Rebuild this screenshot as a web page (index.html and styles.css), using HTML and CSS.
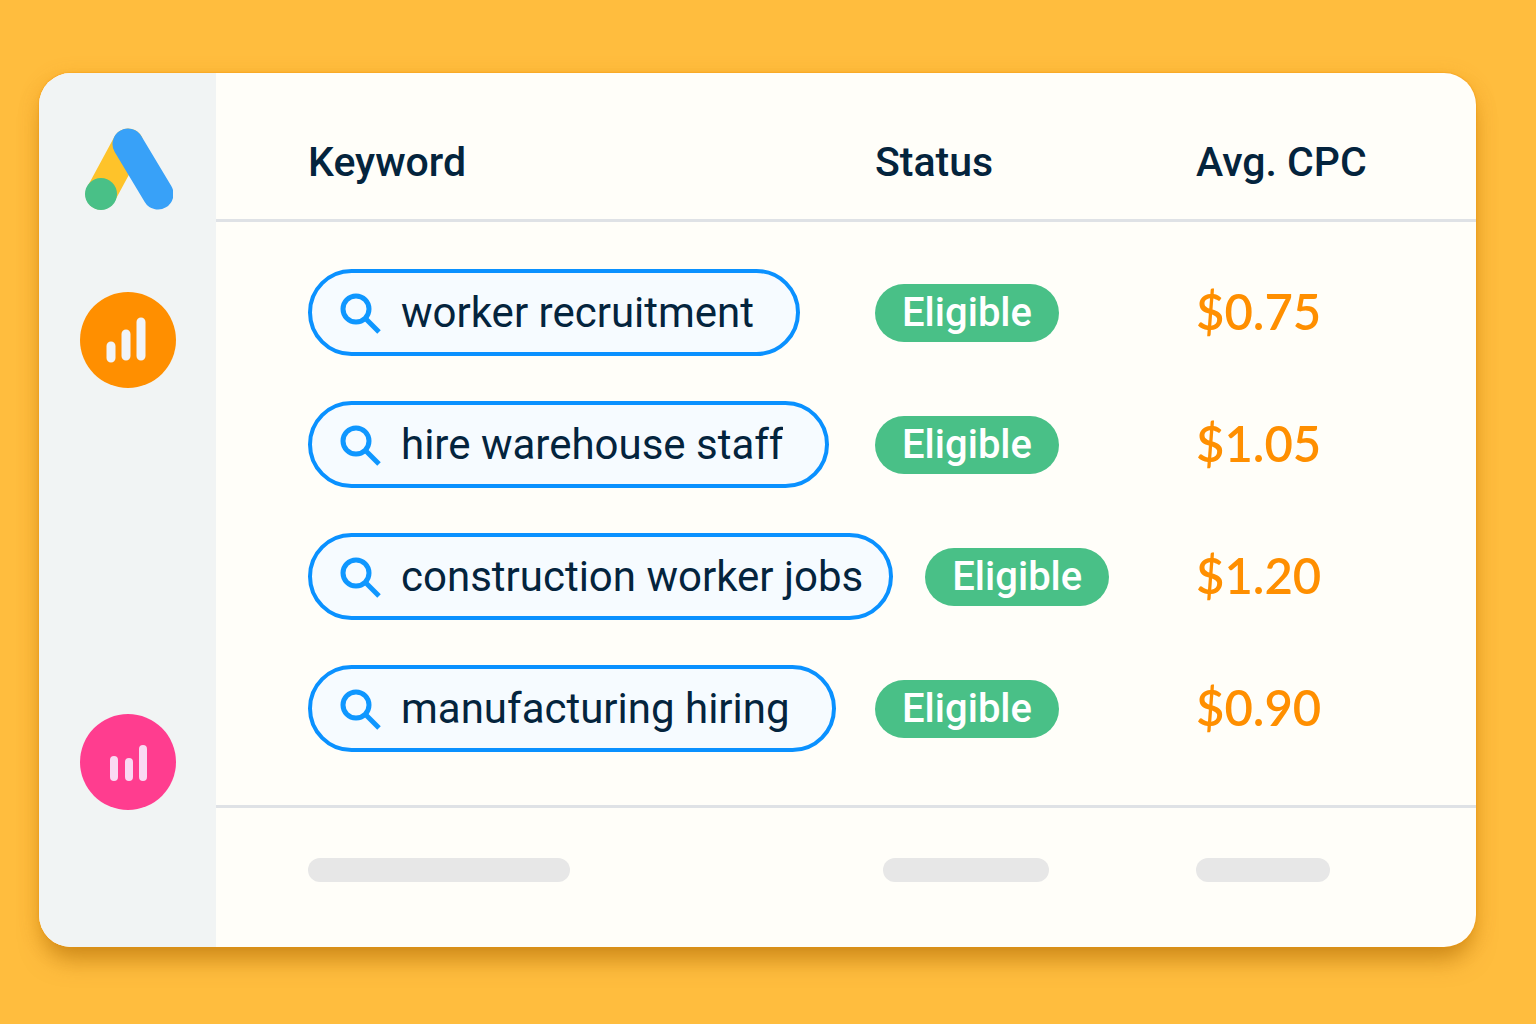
FILE: index.html
```
<!DOCTYPE html>
<html lang="en">
<head>
    <meta charset="UTF-8">
    <meta name="viewport" content="width=device-width, initial-scale=1.0">
    <title>Keywords</title>
    <link rel="stylesheet" href="styles.css">
</head>
<body>
    <div class="card">
        <nav class="sidebar">
            <a href="#" class="logo" aria-label="Home">
                <svg width="90" height="84" viewBox="0 0 90 84">
                    <path d="M45 17 L18 67" stroke="#fec32a" stroke-width="31" stroke-linecap="round"/>
                    <path d="M45 17 L75 67" stroke="#38a1f8" stroke-width="31" stroke-linecap="round"/>
                    <circle cx="18" cy="67" r="16" fill="#49c087"/>
                </svg>
            </a>
            <button class="round orange" aria-label="Campaigns">
                <svg width="96" height="96" viewBox="0 0 96 96">
                    <path d="M31 54V66M46 42V64M61 30V64" stroke="#f1f4f8" stroke-width="9" stroke-linecap="round"/>
                </svg>
            </button>
            <button class="round pink" aria-label="Reports">
                <svg width="96" height="96" viewBox="0 0 96 96">
                    <path d="M34 46V63M49 48V63M63 35V63" stroke="#fad9f3" stroke-width="8" stroke-linecap="round"/>
                </svg>
            </button>
        </nav>
        <table class="keywords">
            <thead>
                <tr>
                    <th>Keyword</th>
                    <th>Status</th>
                    <th>Avg. CPC</th>
                </tr>
            </thead>
            <tbody>
                <tr>
                    <td>
                        <label class="pill">
                            <svg width="42" height="42" viewBox="0 0 42 42"><circle cx="16" cy="17" r="13"/><path d="M25 26L39 40"/></svg>
                            <input type="text" value="worker recruitment" aria-label="Keyword 1">
                        </label>
                    </td>
                    <td><span class="badge">Eligible</span></td>
                    <td class="price">$0.75</td>
                </tr>
                <tr>
                    <td>
                        <label class="pill">
                            <svg width="42" height="42" viewBox="0 0 42 42"><circle cx="16" cy="17" r="13"/><path d="M25 26L39 40"/></svg>
                            <input type="text" value="hire warehouse staff" aria-label="Keyword 2">
                        </label>
                    </td>
                    <td><span class="badge">Eligible</span></td>
                    <td class="price">$1.05</td>
                </tr>
                <tr>
                    <td>
                        <label class="pill long">
                            <svg width="42" height="42" viewBox="0 0 42 42"><circle cx="16" cy="17" r="13"/><path d="M25 26L39 40"/></svg>
                            <input type="text" value="construction worker jobs" aria-label="Keyword 3">
                        </label>
                    </td>
                    <td><span class="badge">Eligible</span></td>
                    <td class="price">$1.20</td>
                </tr>
                <tr>
                    <td>
                        <label class="pill">
                            <svg width="42" height="42" viewBox="0 0 42 42"><circle cx="16" cy="17" r="13"/><path d="M25 26L39 40"/></svg>
                            <input type="text" value="manufacturing hiring" aria-label="Keyword 4">
                        </label>
                    </td>
                    <td><span class="badge">Eligible</span></td>
                    <td class="price">$0.90</td>
                </tr>
            </tbody>
            <tfoot>
                <tr>
                    <td><div class="bar bar-keyword"></div></td>
                    <td><div class="bar bar-status"></div></td>
                    <td><div class="bar bar-price"></div></td>
                </tr>
            </tfoot>
        </table>
    </div>
</body>
</html>
```
FILE: styles.css
```
* {
    margin: 0;
    padding: 0;
    box-sizing: border-box;
}
body {
    font-family: Roboto, "Open Sans", sans-serif;
    font-size: 41px;
    font-weight: 400;
    color: #04243d;
    background: #ffbd3e;
    min-height: 100vh;
    display: flex;
    padding: 73px 60px 77px 39px;
}
.card {
    flex: 1;
    display: flex;
    background: #fffef9;
    border-radius: 32px;
    overflow: hidden;
    box-shadow: 0 0 2px #f39200, 0 18px 24px -6px rgba(160, 95, 0, 0.5), 0 4px 20px rgba(230, 140, 0, 0.3);
}

/* sidebar */
.sidebar {
    width: 177px;
    background: #f1f4f4;
    display: flex;
    flex-direction: column;
    align-items: center;
    padding: 54px 0 137px;
}
.logo svg {
    display: block;
    fill: none;
}
.round {
    width: 96px;
    height: 96px;
    border: none;
    border-radius: 50%;
    cursor: pointer;
}
.round svg {
    display: block;
    fill: none;
}
.orange {
    background: #ff8f00;
    margin-top: 81px;
}
.pink {
    background: #ff3d8f;
    margin-top: auto;
}

/* table */
.keywords {
    flex: 1;
    display: flex;
    flex-direction: column;
}
tr {
    display: grid;
    grid-template-columns: minmax(535px, auto) 1fr 280px;
    column-gap: 32px;
    align-items: center;
    padding-left: 92px;
}
th:last-child,
td:last-child {
    margin-left: -32px;
    padding-left: 32px;
}
thead {
    display: block;
    border-bottom: 3px solid #dfe2e6;
}
thead tr {
    height: 146px;
    padding-top: 32px;
}
th {
    font-weight: 500;
    text-align: left;
}
tbody {
    display: flex;
    flex-direction: column;
    gap: 45px;
    padding: 47px 0 53px;
    flex: 1;
}
.pill {
    display: flex;
    align-items: center;
    gap: 19px;
    width: fit-content;
    height: 87px;
    padding: 0 42px 0 28px;
    border: 4px solid #0a91ff;
    border-radius: 44px;
    background: #f6fbff;
}
.pill.long {
    padding-right: 26px;
}
.pill svg {
    flex: none;
    fill: none;
    stroke: #0f97ff;
    stroke-width: 5;
}
.pill input {
    field-sizing: content;
    font: inherit;
    font-size: 42px;
    color: inherit;
    border: none;
    outline: none;
    background: none;
}
.badge {
    display: inline-flex;
    align-items: center;
    justify-content: center;
    width: 184px;
    height: 58px;
    border-radius: 29px;
    background: #49c087;
    color: #fff;
    font-size: 40px;
    font-weight: 500;
    vertical-align: middle;
}
.price {
    padding-bottom: 4px;
    font-family: Lato, sans-serif;
    font-size: 49px;
    font-weight: 600;
    color: #ff8f00;
}
tfoot {
    display: block;
    border-top: 3px solid #dfe2e6;
    padding: 50px 0 65px;
}
.bar {
    height: 24px;
    border-radius: 12px;
    background: #e7e7e7;
}
.bar-keyword {
    width: 262px;
}
.bar-status {
    width: 166px;
    margin-left: 8px;
}
.bar-price {
    width: 134px;
}
```
